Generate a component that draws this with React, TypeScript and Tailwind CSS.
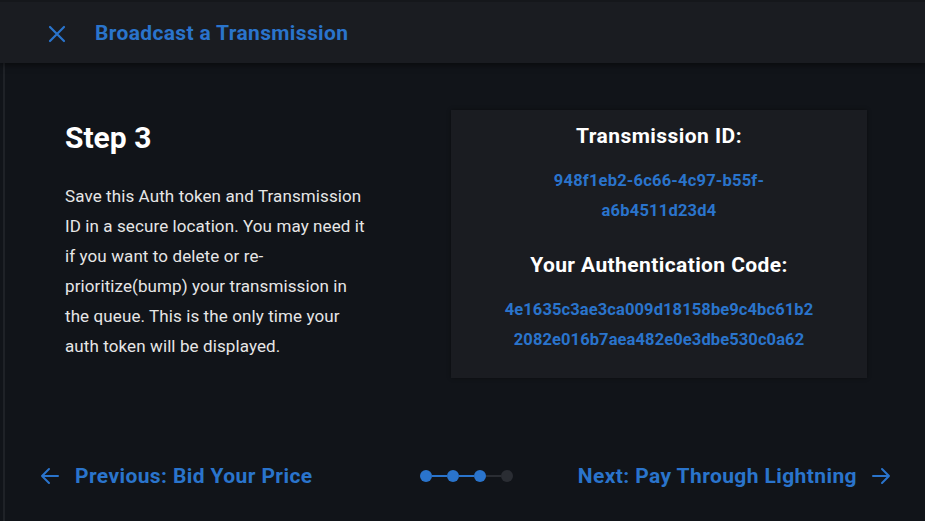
import React from 'react';

const FONT = { fontFamily: '"Roboto", "Liberation Sans", sans-serif' };

const XIcon = () => (
  <svg width="18" height="18" viewBox="0 0 18 18" fill="none" stroke="currentColor" strokeWidth="2.2" strokeLinecap="round">
    <path d="M2 2 L16 16 M16 2 L2 16" />
  </svg>
);

const ArrowLeft = () => (
  <svg width="20" height="18" viewBox="0 0 20 18" fill="none" stroke="currentColor" strokeWidth="2" strokeLinecap="round" strokeLinejoin="round">
    <path d="M18 9 H2 M9 2 L2 9 L9 16" />
  </svg>
);

const ArrowRight = () => (
  <svg width="20" height="18" viewBox="0 0 20 18" fill="none" stroke="currentColor" strokeWidth="2" strokeLinecap="round" strokeLinejoin="round">
    <path d="M2 9 H18 M11 2 L18 9 L11 16" />
  </svg>
);

const Stepper = ({ current, total }: { current: number; total: number }) => (
  <div className="flex items-center">
    {Array.from({ length: total }).map((_, i) => (
      <React.Fragment key={i}>
        {i > 0 && <div className={`h-[2px] w-[15px] ${i < current ? 'bg-[#2a74cc]' : 'bg-[#2a2d33]'}`} />}
        <div className={`w-[12px] h-[12px] rounded-full ${i < current ? 'bg-[#2a74cc]' : 'bg-[#2a2d33]'}`} />
      </React.Fragment>
    ))}
  </div>
);

const PARAGRAPH = [
  'Save this Auth token and Transmission',
  'ID in a secure location. You may need it',
  'if you want to delete or re-',
  'prioritize(bump) your transmission in',
  'the queue. This is the only time your',
  'auth token will be displayed.',
];

export default function App() {
  return (
    <div className="w-[925px] h-[521px] bg-[#111419] text-white flex flex-col overflow-hidden" style={FONT}>
      <header className="h-[63px] bg-[#1a1c21] border-t-2 border-[#15171b] flex items-center shadow-[0_2px_6px_rgba(0,0,0,0.5)] relative z-10">
        <div className="pl-[48px] pr-[29px] text-[#2a74cc] flex items-center pt-[2px]">
          <XIcon />
        </div>
        <h1 className="text-[21px] font-bold text-[#2a74cc] tracking-[0.35px] pt-[2px]">Broadcast a Transmission</h1>
      </header>

      <div className="flex-1 flex border-l-[2px] border-[#1f2227] ml-[3px]">
        <main className="flex-1 flex flex-col">
          <div className="flex pt-[47px] pl-[60px] pr-[58px]">
            <div className="w-[310px]">
              <h2 className="text-[30px] font-bold leading-[36px] mt-[10px]">Step 3</h2>
              <p className="mt-[25px] text-[17px] leading-[30px] tracking-[0.1px] text-[#e6e6e6] whitespace-nowrap">
                {PARAGRAPH.map((line) => (
                  <span key={line} className="block">{line}</span>
                ))}
              </p>
            </div>
            <div className="ml-auto w-[416px] h-[268px] bg-[#1a1c21] flex flex-col items-center pt-[11px] shadow-[0_0_4px_rgba(0,0,0,0.4)]">
              <h3 className="text-[21px] font-bold leading-[30px] tracking-[0.45px]">Transmission ID:</h3>
              <div className="mt-[15px] w-[240px] text-center text-[16.5px] font-bold leading-[30px] tracking-[0.2px] text-[#2a74cc] break-words">
                948f1eb2-6c66-4c97-b55f-<br />a6b4511d23d4
              </div>
              <h3 className="mt-[24px] text-[21px] font-bold leading-[30px] tracking-[0.4px]">Your Authentication Code:</h3>
              <div className="mt-[15px] text-center text-[16.5px] font-bold leading-[30px] tracking-[0.1px] text-[#2a74cc]">
                4e1635c3ae3ca009d18158be9c4bc61b2<br />2082e016b7aea482e0e3dbe530c0a62
              </div>
            </div>
          </div>

          <footer className="mt-auto mb-[29px] flex items-center pl-[35px] pr-[34px] text-[#2a74cc]">
            <div className="flex items-center gap-[15px]">
              <ArrowLeft />
              <span className="text-[21px] font-bold tracking-[0.4px]">Previous: Bid Your Price</span>
            </div>
            <div className="ml-[107px]">
              <Stepper current={3} total={4} />
            </div>
            <div className="ml-auto flex items-center gap-[14px]">
              <span className="text-[21px] font-bold tracking-[0.4px]">Next: Pay Through Lightning</span>
              <ArrowRight />
            </div>
          </footer>
        </main>
      </div>
    </div>
  );
}
